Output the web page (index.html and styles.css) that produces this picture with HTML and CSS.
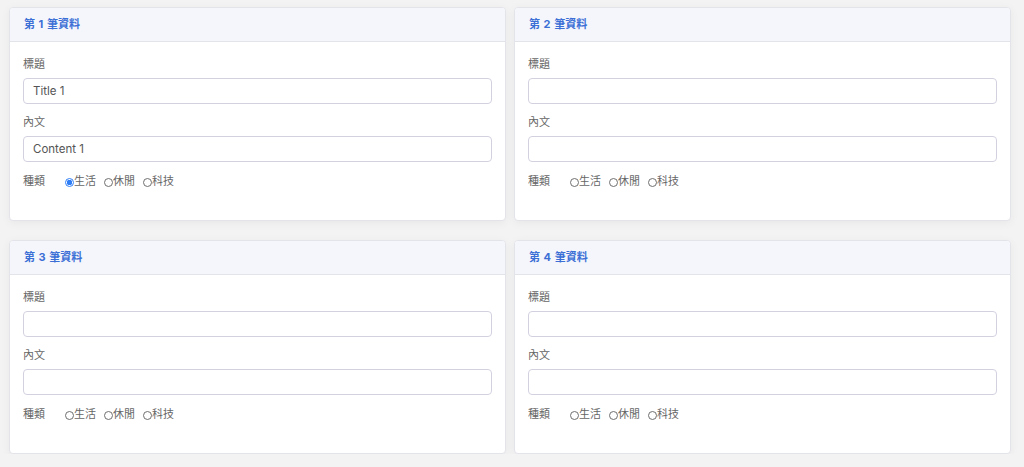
FILE: index.html
```html
<!DOCTYPE html>
<html lang="zh-Hant">
<head>
<meta charset="utf-8">
<title>資料</title>
<link rel="stylesheet" href="styles.css">
</head>
<body>
<div class="grid">
  <section class="card">
    <header class="card-head">第 1 筆資料</header>
    <div class="card-body">
      <label class="label">標題</label>
      <input class="field" type="text" value="Title 1">
      <label class="label">內文</label>
      <input class="field" type="text" value="Content 1">
      <div class="kind">
        <span class="kind-label">種類</span>
        <label class="opt"><input type="radio" name="k1" checked>生活</label>
        <label class="opt"><input type="radio" name="k1">休閒</label>
        <label class="opt"><input type="radio" name="k1">科技</label>
      </div>
    </div>
  </section>
  <section class="card">
    <header class="card-head">第 2 筆資料</header>
    <div class="card-body">
      <label class="label">標題</label>
      <input class="field" type="text" value="">
      <label class="label">內文</label>
      <input class="field" type="text" value="">
      <div class="kind">
        <span class="kind-label">種類</span>
        <label class="opt"><input type="radio" name="k2">生活</label>
        <label class="opt"><input type="radio" name="k2">休閒</label>
        <label class="opt"><input type="radio" name="k2">科技</label>
      </div>
    </div>
  </section>
  <section class="card">
    <header class="card-head">第 3 筆資料</header>
    <div class="card-body">
      <label class="label">標題</label>
      <input class="field" type="text" value="">
      <label class="label">內文</label>
      <input class="field" type="text" value="">
      <div class="kind">
        <span class="kind-label">種類</span>
        <label class="opt"><input type="radio" name="k3">生活</label>
        <label class="opt"><input type="radio" name="k3">休閒</label>
        <label class="opt"><input type="radio" name="k3">科技</label>
      </div>
    </div>
  </section>
  <section class="card">
    <header class="card-head">第 4 筆資料</header>
    <div class="card-body">
      <label class="label">標題</label>
      <input class="field" type="text" value="">
      <label class="label">內文</label>
      <input class="field" type="text" value="">
      <div class="kind">
        <span class="kind-label">種類</span>
        <label class="opt"><input type="radio" name="k4">生活</label>
        <label class="opt"><input type="radio" name="k4">休閒</label>
        <label class="opt"><input type="radio" name="k4">科技</label>
      </div>
    </div>
  </section>
</div>
</body>
</html>
```
FILE: styles.css
```css
html, body {
  margin: 0;
  padding: 0;
  background: #f3f3f4;
  font-family: Inter, "Noto Sans CJK TC", sans-serif;
  color: #666;
}
.grid {
  display: grid;
  grid-template-columns: 497px 497px;
  column-gap: 8px;
  row-gap: 19px;
  padding: 7px 13px 0 9px;
}
.card {
  background: #fff;
  border: 1px solid #e3e3ea;
  border-radius: 4px;
  box-shadow: 0 2px 10px rgba(0, 0, 0, 0.05);
  overflow: hidden;
}
.card-head {
  height: 33px;
  line-height: 33px;
  padding: 0 14px;
  background: #f5f6fb;
  border-bottom: 1px solid #e3e3ea;
  color: #3b6fd6;
  font-size: 11px;
  font-weight: 700;
  word-spacing: 1px;
}
.card-body {
  display: flex;
  flex-direction: column;
  padding: 14px 13px 31px 13px;
}
.label {
  font-size: 11px;
  line-height: 16px;
  color: #666;
  margin-bottom: 6px;
}
.field {
  box-sizing: border-box;
  height: 26px;
  width: 100%;
  margin: 0 0 10px 0;
  padding: 0 9px;
  border: 1px solid #d3d1e0;
  border-radius: 4px;
  font-family: Inter, "Noto Sans CJK TC", sans-serif;
  font-size: 11.5px;
  color: #555;
  background: #fff;
  outline: none;
}
.field + .label + .field { margin-bottom: 11px; }
.kind {
  display: flex;
  align-items: center;
  font-size: 11px;
  line-height: 16px;
  color: #666;
}
.kind-label {
  width: 42px;
}
.opt {
  display: flex;
  align-items: center;
  margin-right: 8px;
}
.opt input {
  appearance: none;
  -webkit-appearance: none;
  width: 9px;
  height: 9px;
  margin: 3px 0 0 0;
  border: 1px solid #6f6f6f;
  border-radius: 50%;
  box-sizing: border-box;
  background: #fff;
}
.opt input:checked {
  border: 1px solid #2f7ef6;
  background: radial-gradient(circle, #2f7ef6 0 2.6px, #fff 3px);
}
```
